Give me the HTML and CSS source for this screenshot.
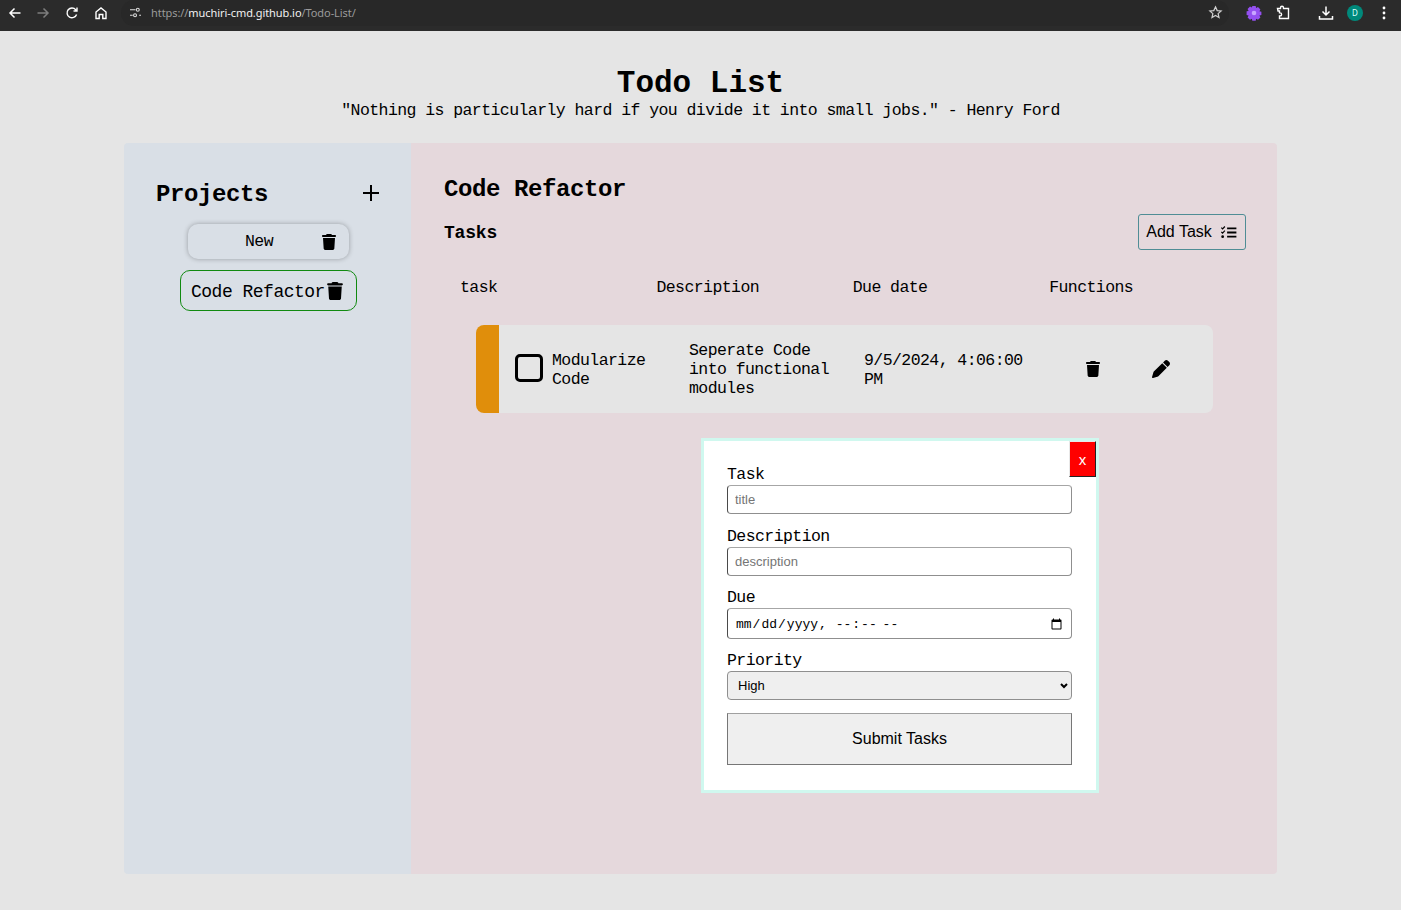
FILE: index.html
```html
<!DOCTYPE html>
<html lang="en">
<head>
<meta charset="utf-8">
<title>Todo List</title>
<link rel="stylesheet" href="styles.css">
</head>
<body>
<svg class="sprite" width="0" height="0" aria-hidden="true">
  <symbol id="trash" viewBox="0 0 448 512"><path d="M135.2 17.7L128 32H32C14.3 32 0 46.3 0 64S14.3 96 32 96H416c17.7 0 32-14.3 32-32s-14.3-32-32-32H320l-7.2-14.3C307.4 6.8 296.3 0 284.2 0H163.8c-12.1 0-23.2 6.8-28.6 17.7zM416 128H32L53.2 467c1.6 25.3 22.6 45 47.9 45H346.9c25.3 0 46.3-19.7 47.9-45L416 128z"/></symbol>
</svg>
<header class="chrome">
  <div class="nav">
    <svg class="ci back" viewBox="0 0 16 16"><path d="M13.5 8H3M7.5 3.5 3 8l4.500 4.500" fill="none" stroke="#fff" stroke-width="1.500"/></svg>
    <svg class="ci" viewBox="0 0 16 16"><path d="M2.500 8H13M8.500 3.500 13 8l-4.500 4.500" fill="none" stroke="#7d7d7d" stroke-width="1.500"/></svg>
    <svg class="ci" viewBox="0 0 16 16"><path d="M12.600 9.500A4.900 4.900 0 1 1 11.700 4.700L13 6M13 2.500V6H9.500" fill="none" stroke="#fff" stroke-width="1.400"/></svg>
    <svg class="ci" viewBox="0 0 16 16"><path d="M3 7 8 3l5 4v6.500H9.800V9.500H6.200v4H3Z" fill="none" stroke="#fff" stroke-width="1.400"/></svg>
  </div>
  <div class="omni">
    <svg class="tune" viewBox="0 0 12 12"><path d="M0 3h6M10 9h2M0 9h3" stroke="#ddd" stroke-width="1.200" fill="none"/><circle cx="8.500" cy="3" r="1.600" fill="none" stroke="#ddd" stroke-width="1.200"/><circle cx="5.500" cy="9" r="1.600" fill="none" stroke="#ddd" stroke-width="1.200"/></svg>
    <span class="url"><span class="dim">https://</span>muchiri-cmd.github.io<span class="dim">/Todo-List/</span></span>
    <svg class="star" viewBox="0 0 16 16"><path d="m8 2 1.800 4 4.200.4-3.200 2.800.95 4.200L8 11.200l-3.750 2.200.95-4.200L2 6.400 6.200 6Z" fill="none" stroke="#cfcfcf" stroke-width="1.300"/></svg>
  </div>
  <div class="exts">
    <svg class="ci ext-gear" viewBox="0 0 16 16"><path d="M6.300 1h3.400l.4 2 1.900-1 2.400 2.400-1 1.900 2 .4v3.400l-2 .4 1 1.900-2.400 2.400-1.900-1-.4 2H6.300l-.4-2-1.900 1-2.400-2.400 1-1.900-2-.4V6.300l2-.4-1-1.900L4 1.600l1.900 1Z" fill="#9450f0"/><circle cx="8" cy="8" r="2.300" fill="#c8a6ff"/></svg>
    <svg class="ci ext-puzzle" viewBox="0 0 16 16"><path d="M2.500 3.500h3V2.800a1.500 1.500 0 0 1 3 0v.7h5v10h-9v-2.600h.6a1.500 1.500 0 0 0 0-3h-.6V6H3Z" fill="none" stroke="#fff" stroke-width="1.400"/></svg>
    <svg class="ci ext-dl" viewBox="0 0 16 16"><path d="M8 1.500v8M4.500 6.500 8 10l3.500-3.500M1.500 11v3h13v-3" fill="none" stroke="#fff" stroke-width="1.500"/></svg>
    <span class="avatar">D</span>
    <svg class="ci ext-more" viewBox="0 0 16 16"><circle cx="8" cy="3" r="1.400" fill="#fff"/><circle cx="8" cy="8" r="1.400" fill="#fff"/><circle cx="8" cy="13" r="1.400" fill="#fff"/></svg>
  </div>
</header>

<div class="intro">
  <h1>Todo List</h1>
  <p>"Nothing is particularly hard if you divide it into small jobs." - Henry Ford</p>
</div>

<main class="board">
  <aside class="projects">
    <div class="projects-head">
      <h2>Projects</h2>
      <svg class="plus" viewBox="0 0 16 16"><path d="M8 0v16M0 8h16" stroke="#000" stroke-width="2"/></svg>
    </div>
    <div class="project project-new">
      <span class="project-name">New</span>
      <svg class="ico-trash"><use href="#trash"/></svg>
    </div>
    <div class="project project-active">
      <span class="active-name">Code Refactor</span>
      <svg class="ico-trash big"><use href="#trash"/></svg>
    </div>
  </aside>

  <section class="content">
    <h2 class="content-title">Code Refactor</h2>
    <div class="tasks-bar">
      <h3>Tasks</h3>
      <button class="add-task" type="button">Add Task
        <svg class="list-ico" viewBox="0 0 17 14"><path d="M7 2.500h10M7 7h10M7 11.500h10" stroke="#000" stroke-width="2"/><path d="m.8 1.800 1.300 1.300L4.600.5M.8 6.300l1.300 1.300 2.500-2.600" fill="none" stroke="#000" stroke-width="1.300"/><circle cx="2.200" cy="11.500" r="1.500"/></svg>
      </button>
    </div>
    <div class="columns">
      <span>task</span><span>Description</span><span>Due date</span><span>Functions</span>
    </div>
    <article class="task">
      <span class="task-flag"></span>
      <span class="check"></span>
      <span class="t-name">Modularize Code</span>
      <span class="t-desc">Seperate Code into functional modules</span>
      <span class="t-date">9/5/2024, 4:06:00 PM</span>
      <svg class="t-trash"><use href="#trash"/></svg>
      <svg class="t-pen" viewBox="0 0 512 512"><path d="M362.700 19.300L314.300 67.700 444.300 197.700l48.400-48.400c25-25 25-65.500 0-90.500L453.300 19.300c-25-25-65.500-25-90.500 0zm-71 71L58.600 323.500c-10.400 10.400-18 23.300-22.200 37.400L1 481.200C-1.500 489.700 .8 498.800 7 505s15.300 8.500 23.700 6.100l120.300-35.400c14.100-4.200 27-11.800 37.400-22.200L421.700 220.300 291.700 90.300z"/></svg>
    </article>

    <form class="popup">
      <button class="close" type="button">x</button>
      <label for="f-title">Task</label>
      <input id="f-title" class="field" type="text" placeholder="title">
      <label for="f-desc">Description</label>
      <input id="f-desc" class="field tight" type="text" placeholder="description">
      <label for="f-due">Due</label>
      <input id="f-due" class="field due tight" type="datetime-local">
      <label for="f-pri">Priority</label>
      <select id="f-pri" class="field pick"><option>High</option><option>Medium</option><option>Low</option></select>
      <button class="submit" type="button">Submit Tasks</button>
    </form>
  </section>
</main>
</body>
</html>
```
FILE: styles.css
```css
* { box-sizing: border-box; }
html, body { margin: 0; height: 100%; }
body {
  background: #e5e5e5;
  color: #000;
  font-family: "Liberation Mono", "DejaVu Sans Mono", monospace;
  font-size: 16.5px;
  letter-spacing: -0.57px;
  overflow: hidden;
}
.sprite { position: absolute; }

/* browser toolbar */
.chrome {
  height: 31px;
  background: #2b2b2b;
  display: flex;
  align-items: center;
  padding-left: 7px;
  padding-bottom: 6px;
  letter-spacing: 0;
}
.nav { display: flex; gap: 13px; align-items: center; }
.ci { width: 16px; height: 16px; display: block; flex: none; }
.back { margin-right: -1px; }
.omni {
  margin-left: 12px;
  width: 1108px;
  height: 26px;
  border-radius: 13px;
  background: #282828;
  display: flex;
  align-items: center;
  padding-left: 9px;
  padding-right: 6px;
}
.tune { width: 11px; height: 11px; flex: none; }
.url {
  margin-left: 10px;
  flex: 1;
  font: 11px/1 "Noto Sans", "Open Sans", sans-serif;
  color: #f2f2f2;
  letter-spacing: -0.07px;
}
.dim { color: #9a9a9a; }
.star { width: 15px; height: 15px; flex: none; }
.exts { display: flex; align-items: center; margin-left: 17px; }
.ext-puzzle { margin-left: 13px; }
.ext-dl { margin-left: 27px; }
.avatar {
  margin-left: 13px;
  width: 16px;
  height: 16px;
  border-radius: 50%;
  background: #00897b;
  color: #dff;
  font: 8px/16px "Noto Sans", sans-serif;
  text-align: center;
}
.ext-more { margin-left: 13px; }

/* intro */
.intro { text-align: center; padding-top: 36px; height: 112px; }
.intro h1 { margin: 0; font-size: 31px; line-height: 34px; letter-spacing: 0; }
.intro p { margin: 0; line-height: 20px; }

/* board */
.board {
  width: 1153px;
  height: 731px;
  margin: 0 0 0 124px;
  display: flex;
  border-radius: 4px;
  overflow: hidden;
  position: relative;
}
.projects {
  width: 287px;
  flex: none;
  background: #d9dfe6;
  padding: 37px 32px 0;
}
.projects-head {
  display: flex;
  justify-content: space-between;
  align-items: center;
  height: 28px;
  margin-bottom: 16px;
}
.projects h2 { margin: 2px 0 0; font-size: 24px; letter-spacing: -0.4px; line-height: 28px; }
.plus { width: 16px; height: 16px; margin-top: -2px; }
.project {
  display: flex;
  align-items: center;
  justify-content: space-between;
  border-radius: 10px;
}
.project-new {
  width: 161px;
  height: 35px;
  margin: 0 0 11px 32px;
  background: #d9dfe6;
  box-shadow: 0 0 5px rgba(0, 0, 0, 0.3);
  padding: 0 13px 0 0;
}
.project-name { flex: 1; text-align: center; padding-left: 8px; }
.project-active {
  width: 177px;
  height: 41px;
  margin-left: 24px;
  border: 1px solid #118a11;
  padding: 0 13px 0 10px;
  font-size: 18px;
  letter-spacing: -0.5px;
  background: #d9dfe6;
}
.active-name { white-space: nowrap; padding-top: 2px; }
.ico-trash { width: 14px; height: 16px; display: block; flex: none; }
.ico-trash.big { width: 16px; height: 18px; }

/* content */
.content {
  flex: 1;
  background: #e5d8dc;
  padding: 33px 32px 0 33px;
  position: relative;
}
.content-title { margin: 0 0 10px; font-size: 24px; line-height: 28px; letter-spacing: -0.4px; }
.tasks-bar { display: flex; justify-content: space-between; align-items: center; height: 36px; }
.tasks-bar h3 { margin: 1px 0 0; font-size: 18px; line-height: 22px; letter-spacing: -0.2px; }
.add-task {
  width: 108px;
  height: 36px;
  padding: 0;
  background: transparent;
  border: 1px solid #4f8d95;
  border-radius: 3px;
  font: 16px "Liberation Sans", Arial, sans-serif;
  color: #000;
  display: flex;
  align-items: center;
  justify-content: center;
  gap: 8px;
}
.list-ico { width: 17px; height: 13px; }
.columns {
  display: grid;
  grid-template-columns: repeat(4, 196.400px);
  padding-left: 16px;
  margin-top: 28px;
  height: 20px;
  line-height: 20px;
}
.task {
  margin: 27px 32px 0;
  width: 737px;
  height: 88px;
  background: #e5e5e5;
  border-radius: 8px;
  overflow: hidden;
  display: grid;
  grid-template-columns: 23px 16px 28px 9px 137px 175px 222px 30px 1fr;
  align-items: center;
  line-height: 19px;
}
.task-flag { grid-column: 1; align-self: stretch; background: #e08e0b; }
.check {
  grid-column: 3;
  width: 28px;
  height: 28px;
  border: 3px solid #000;
  border-radius: 5px;
  background: #e5e5e5;
  margin-top: -2px;
}
.t-name { grid-column: 5; width: 110px; padding-top: 2px; }
.t-desc { grid-column: 6; width: 150px; padding-top: 1px; }
.t-date { grid-column: 7; width: 170px; padding-top: 1px; }
.t-trash { grid-column: 8; width: 14px; height: 16px; }
.t-pen { grid-column: 9; width: 18px; height: 18px; margin-left: 36px; }

/* popup */
.popup {
  position: absolute;
  left: 290px;
  top: 295px;
  width: 398px;
  height: 355px;
  background: #fff;
  border: 3px solid #d0f8ef;
  padding: 24px 24px 0 23px;
  display: flex;
  flex-direction: column;
}
.popup label { line-height: 20px; display: block; height: 20px; }
.field {
  width: 345px;
  flex: none;
  margin: 0 0 13px;
  border-radius: 4px;
  letter-spacing: 0;
  border: 1px solid #8f8f8f;
  border-top-color: #a6a6a6;
  border-left-color: #4a4a4a;
  outline: none;
}
.field.tight { margin-bottom: 12px; }
input.field {
  height: 29px;
  padding: 0 7px;
  font: 13px "Liberation Sans", Arial, sans-serif;
  background: #fff;
}
.field::placeholder { color: #757575; }
input.due {
  height: 31px;
  padding: 1px 6px 0 7px;
  font: 13px "Liberation Mono", monospace;
}
.pick {
  height: 29px;
  padding: 0 6px;
  appearance: none;
  background: #efefef url("data:image/svg+xml,%3Csvg xmlns='http://www.w3.org/2000/svg' width='8' height='6'%3E%3Cpath d='M1 1l3 3 3-3' fill='none' stroke='%23000' stroke-width='2'/%3E%3C/svg%3E") no-repeat right 3px center;
  border-color: #8f8f8f;
  color: #000;
  padding-left: 10px;
  font: 13px "Liberation Sans", Arial, sans-serif;
}
.submit {
  width: 345px;
  height: 52px;
  background: #efefef;
  border: 1px solid #767676;
  border-top-color: #a0a0a0;
  border-radius: 0;
  font: 16px "Liberation Sans", Arial, sans-serif;
  color: #000;
}
.close {
  position: absolute;
  right: 0;
  top: 0;
  width: 27px;
  height: 36px;
  padding: 0;
  background: #f00;
  color: #fff;
  border: 1px solid;
  border-color: #e8e8e8 #222 #222 #e8e8e8;
  font: 15px "Liberation Sans", Arial, sans-serif;
}
```
